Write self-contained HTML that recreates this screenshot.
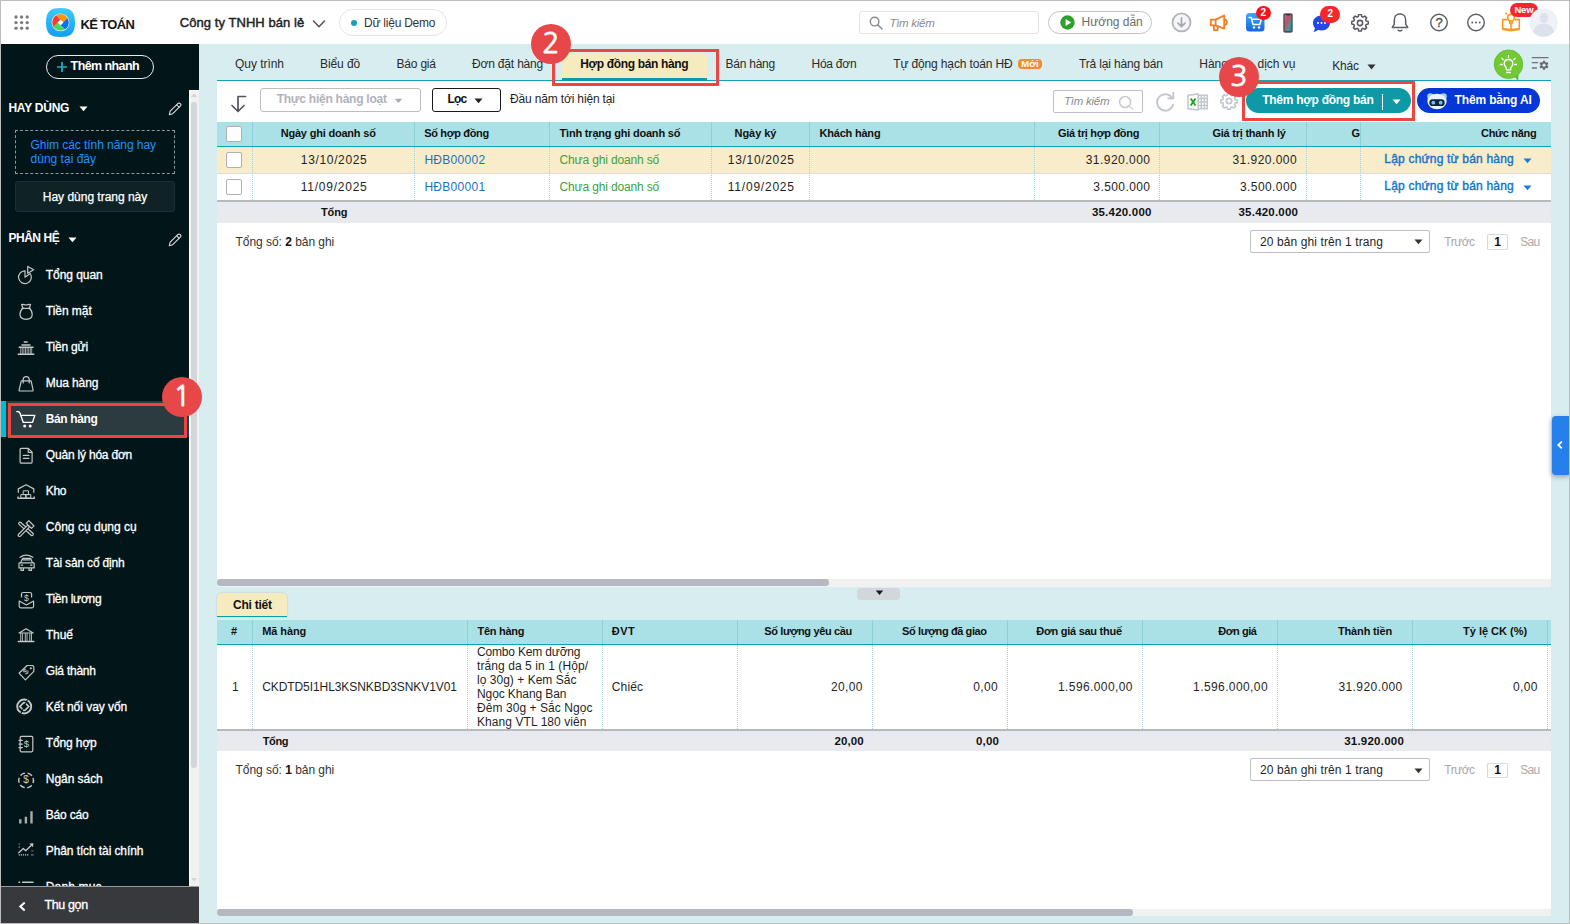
<!DOCTYPE html>
<html lang="vi">
<head>
<meta charset="utf-8">
<title>Kế toán - Hợp đồng bán hàng</title>
<style>
*{box-sizing:border-box;margin:0;padding:0}
html,body{width:1570px;height:924px;overflow:hidden;background:#fff}
body{font-family:"Liberation Sans",sans-serif;font-size:12px;color:#1f1f1f;position:relative}
.abs{position:absolute}
.t{position:absolute;white-space:nowrap}
#frame{position:absolute;left:0;top:0;width:1570px;height:924px;border:1px solid #bdbdbd;z-index:50;pointer-events:none}
#hdr{position:absolute;left:0;top:0;width:1570px;height:44px;background:#fff}
#sb{position:absolute;left:0;top:0;width:0;height:0}
#main{position:absolute;left:0;top:0;width:0;height:0}
#top{position:absolute;left:0;top:0;width:0;height:0;z-index:20}
.ic{fill:none;stroke:#c4c7c7;stroke-width:1.2;stroke-linecap:round;stroke-linejoin:round}
.vl{position:absolute;width:0;border-left:1px dotted #9dd3d9}
.vh{position:absolute;width:1px;background:#8fd0d6}
.cb{position:absolute;width:15.5px;height:15.5px;border:1px solid #b0b0b0;border-radius:2px;background:#fff}
.red{position:absolute;border:3px solid #ee4540}
.num{position:absolute;width:40px;height:40px;border-radius:50%;background:#e8474a;color:#fff;text-align:center;font-family:"NanumGothic","Liberation Sans",sans-serif;-webkit-text-stroke:.8px #fff;font-size:28.5px;line-height:39px}

</style>
</head>
<body>
<div id="hdr">
<svg class="abs" style="left:14.2px;top:15.3px;" width="16" height="16" viewBox="0 0 16 16"><circle cx="2.0" cy="2.0" r="1.65" fill="#7b7b7b"/><circle cx="2.0" cy="7.6" r="1.65" fill="#7b7b7b"/><circle cx="2.0" cy="13.2" r="1.65" fill="#7b7b7b"/><circle cx="7.6" cy="2.0" r="1.65" fill="#7b7b7b"/><circle cx="7.6" cy="7.6" r="1.65" fill="#7b7b7b"/><circle cx="7.6" cy="13.2" r="1.65" fill="#7b7b7b"/><circle cx="13.2" cy="2.0" r="1.65" fill="#7b7b7b"/><circle cx="13.2" cy="7.6" r="1.65" fill="#7b7b7b"/><circle cx="13.2" cy="13.2" r="1.65" fill="#7b7b7b"/></svg>
<svg class="abs" style="left:46px;top:8px;" width="29" height="29" viewBox="0 0 29 29"><defs><linearGradient id="lg" x1="0" y1="0" x2="0" y2="1"><stop offset="0" stop-color="#3ecbfb"/><stop offset="1" stop-color="#119ef0"/></linearGradient>
<clipPath id="lc"><circle cx="14.500" cy="14.400" r="8.300"/></clipPath></defs>
<path d="M14.500 0C24 0 29 2.500 29 14.500S24 29 14.500 29 0 26.500 0 14.500 5 0 14.500 0Z" fill="url(#lg)"/>
<circle cx="14.500" cy="14.400" r="8.900" fill="#e9f6fe"/>
<g clip-path="url(#lc)">
<path d="M14.500 11.800L-0.500 -3.200L32.200 -0.600L17.100 14.400Z" fill="#ff9705"/>
<path d="M17.100 14.400L32.200 -0.600L29.500 32L14.500 17Z" fill="#0b6dff"/>
<path d="M14.500 17L29.500 32L-3.100 29.400L11.900 14.400Z" fill="#4bd763"/>
<path d="M11.900 14.400L-3.100 29.400L-0.500 -3.200L14.500 11.800Z" fill="#ff3b30"/>
</g>
<path d="M14.500 11.600L17.300 14.400 14.500 17.200 11.700 14.400Z" fill="#fff"/></svg>
<svg class="abs" style="left:312px;top:19px;" width="14" height="10" viewBox="0 0 14 10"><path d="M1.5 2L7 7.8 12.5 2" fill="none" stroke="#555" stroke-width="1.5" stroke-linecap="round" stroke-linejoin="round"/></svg>
<div class="abs" style="left:339px;top:9px;width:108px;height:27px;border:1px solid #e1e4e8;border-radius:14px;background:#fff"></div>
<div class="abs" style="left:351px;top:20px;width:6px;height:6px;border-radius:50%;background:#18a0b0"></div>
<div class="abs" style="left:859px;top:11px;width:180px;height:23px;border:1px solid #e3e3e3;border-radius:3px;background:#fff"></div>
<svg class="abs" style="left:869px;top:16px;" width="14" height="14" viewBox="0 0 14 14"><circle cx="5.6" cy="5.6" r="4.3" fill="none" stroke="#8a8a8a" stroke-width="1.4"/><path d="M8.8 8.8L12.8 12.8" stroke="#8a8a8a" stroke-width="1.6" stroke-linecap="round"/></svg>
<div class="abs" style="left:1048px;top:11px;width:104px;height:23px;border:1px solid #c2c2c2;border-radius:12px;background:#fff"></div>
<svg class="abs" style="left:1060px;top:15px;" width="15" height="15" viewBox="0 0 15 15"><circle cx="7.5" cy="7.5" r="7.2" fill="#2ea12b"/><path d="M5.6 4.1V10.9L11.2 7.5Z" fill="#fff"/></svg>
<svg class="abs" style="left:1170.5px;top:11.5px;" width="21" height="21" viewBox="0 0 21 21"><circle cx="10.5" cy="10.4" r="9" fill="#f5f6f9" stroke="#b2b3b6" stroke-width="1.800"/><path d="M10.5 5.800V14.300M7 11.200L10.500 14.700 14 11.200" fill="none" stroke="#a9aaae" stroke-width="1.800" stroke-linecap="round" stroke-linejoin="round"/></svg>
<svg class="abs" style="left:1208px;top:14px;" width="22" height="18" viewBox="0 0 22 18"><g fill="none" stroke="#f67d20" stroke-width="1.800" stroke-linejoin="round" stroke-linecap="round"><path d="M2.800 5.600H7.600L16.200 1.500V14.600L7.600 11.300H2.800Z"/><path d="M7.600 5.600V11.300"/><path d="M5.900 11.600V16.100H9.700V12.300"/><path d="M16.600 5.500C19.600 5.900 19.600 10.400 16.600 10.800"/></g></svg>
<svg class="abs" style="left:1246px;top:13px;" width="19" height="19" viewBox="0 0 19 19"><defs><linearGradient id="cg" x1="0" y1="0" x2="0" y2="1"><stop offset="0" stop-color="#45a4f7"/><stop offset="1" stop-color="#1666e0"/></linearGradient></defs><rect x="0" y="0" width="18.5" height="18.5" rx="3.5" fill="url(#cg)"/><path d="M3 4.5H5.2L7 11.5H13.8L15.3 6.3H6" fill="none" stroke="#fff" stroke-width="1.5" stroke-linejoin="round" stroke-linecap="round"/><circle cx="8" cy="14.5" r="1.2" fill="#fff"/><circle cx="13" cy="14.5" r="1.2" fill="#fff"/></svg>
<div class="abs" style="left:1256px;top:5.8px;width:15px;height:14.3px;border-radius:50%;background:#f4141c"></div>
<svg class="abs" style="left:1283px;top:12.5px;" width="10" height="20" viewBox="0 0 10 20"><defs><linearGradient id="pg" x1="0" y1="0" x2="1" y2="1"><stop offset="0" stop-color="#7a86c8"/><stop offset=".35" stop-color="#d8455f"/><stop offset=".7" stop-color="#3d9e8e"/><stop offset="1" stop-color="#3a6fd0"/></linearGradient></defs><rect x="0.500" y="0.500" width="9" height="19" rx="1.800" fill="#3a3d42" stroke="#7c7f85" stroke-width="0.900"/><rect x="1.500" y="1.700" width="7" height="16.600" rx="0.800" fill="url(#pg)"/><rect x="3.300" y="1.300" width="3.400" height="1.100" rx=".5" fill="#2a2d33"/></svg>
<svg class="abs" style="left:1311.5px;top:14.5px;" width="19" height="18" viewBox="0 0 19 18"><path d="M9.5 0.5C14.5 0.5 18 3.8 18 8S14.5 15.5 9.5 15.5C8.3 15.5 7.2 15.3 6.2 15L1.5 17.2 3 13.2C1.7 11.9 1 10 1 8 1 3.8 4.5 0.5 9.500 0.5Z" fill="#2447e8"/><circle cx="6" cy="8" r="1" fill="#fff"/><circle cx="9.5" cy="8" r="1" fill="#fff"/><circle cx="13" cy="8" r="1" fill="#fff"/></svg>
<div class="abs" style="left:1320px;top:6px;width:20.3px;height:16.5px;border-radius:8.250px;background:#f6262b"></div>
<svg class="abs" style="left:1351.2px;top:13.5px;" width="18" height="18" viewBox="0 0 20 20"><g fill="none" stroke="#5a5d63" stroke-width="1.750" stroke-linejoin="round"><path d="M8.6 1.2h2.8l.5 2.3 1.5.7 2-1.2 2 2-1.2 2 .7 1.500 2.300.5v2.800l-2.300.5-.7 1.500 1.200 2-2 2-2-1.200-1.500.700-.5 2.300h-2.800l-.5-2.300-1.500-.700-2 1.200-2-2 1.200-2-.700-1.500-2.300-.5v-2.800l2.300-.5.700-1.500-1.200-2 2-2 2 1.200 1.500-.700Z" transform="translate(0 -.7)"/><circle cx="10" cy="10" r="2.900"/></g></svg>
<svg class="abs" style="left:1390px;top:12px;" width="20" height="22" viewBox="0 0 20 22"><g fill="none" stroke="#5a5d63" stroke-width="1.5" stroke-linejoin="round" stroke-linecap="round"><path d="M10 2C6.300 2 4.300 4.800 4.300 8.200V12.200L2.300 15.400H17.700L15.700 12.200V8.200C15.700 4.800 13.700 2 10 2Z"/><path d="M8 18.200C8.600 19.200 11.400 19.200 12 18.200"/></g></svg>
<svg class="abs" style="left:1429px;top:13px;" width="20" height="20" viewBox="0 0 20 20"><circle cx="10" cy="9.500" r="8.300" fill="none" stroke="#5a5d63" stroke-width="1.400"/></svg>
<svg class="abs" style="left:1466px;top:13px;" width="20" height="20" viewBox="0 0 20 20"><circle cx="10" cy="9.500" r="8.300" fill="none" stroke="#5a5d63" stroke-width="1.400"/><circle cx="6.300" cy="9.500" r="1" fill="#5a5d63"/><circle cx="10" cy="9.500" r="1" fill="#5a5d63"/><circle cx="13.700" cy="9.500" r="1" fill="#5a5d63"/></svg>
<svg class="abs" style="left:1501px;top:12px;" width="20" height="20" viewBox="0 0 20 20"><g fill="none" stroke="#f89a1c" stroke-width="1.600" stroke-linejoin="round" stroke-linecap="round"><path d="M5.800 7.600H1.700V16.600L10 17.900 18.300 16.600V7.600H14.200"/><path d="M1.700 17.600L10 18.800 18.300 17.600" stroke-width="1.200"/><circle cx="10" cy="5.700" r="3.300"/><path d="M8.700 9V11.300H11.300V9M10 11.500V17.500"/><path d="M4.800 1.300L5.300 1.800"/></g></svg>
<div class="abs" style="left:1510px;top:3.2px;width:28.2px;height:13.4px;border-radius:7px;background:#f5272d"></div>
<svg class="abs" style="left:1528.8px;top:8px;" width="29" height="29" viewBox="0 0 29 29"><defs><clipPath id="av"><circle cx="14.500" cy="14.500" r="14.300"/></clipPath></defs><circle cx="14.500" cy="14.500" r="14.300" fill="#eef1f6"/><g clip-path="url(#av)" fill="#dce2ec"><ellipse cx="14.800" cy="10" rx="4" ry="5.200"/><path d="M3.500 29C3.500 20 8 17 11.500 16H18C21.500 17 26 20 26 29Z"/></g></svg>
<div class="t" style="font-size:13px;color:#161616;line-height:16px;top:17.30px;font-weight:bold;letter-spacing:-0.628px;left:80.50px;">KẾ TOÁN</div>
<div class="t" style="font-size:13px;color:#222;line-height:16px;top:14.60px;-webkit-text-stroke:0.45px #222;letter-spacing:0.071px;left:179.70px;">Công ty TNHH bán lẻ</div>
<div class="t" style="font-size:12px;color:#333;line-height:16px;top:14.80px;letter-spacing:-0.233px;left:364.00px;">Dữ liệu Demo</div>
<div class="t" style="font-size:11.5px;color:#8c8c8c;line-height:16px;top:15.00px;font-style:italic;letter-spacing:-0.269px;left:889.40px;">Tìm kiếm</div>
<div class="t" style="font-size:12px;color:#6b6b6b;line-height:16px;top:14.30px;letter-spacing:-0.010px;left:1081.60px;">Hướng dẫn</div>
<div class="t" style="font-size:10px;color:#fff;line-height:16px;top:4.90px;font-weight:bold;left:1260.60px;">2</div>
<div class="t" style="font-size:10px;color:#fff;line-height:16px;top:6.30px;font-weight:bold;left:1327.40px;">2</div>
<div class="t" style="font-size:13px;color:#4a4d53;line-height:16px;top:14.70px;-webkit-text-stroke:0.3px #4a4d53;left:1435.60px;">?</div>
<div class="t" style="font-size:9.5px;color:#fff;line-height:16px;top:1.90px;font-weight:bold;letter-spacing:-0.173px;left:1514.40px;">New</div>
</div>
<div id="sb">
<div class="abs" style="left:0px;top:44px;width:199px;height:880px;background:#02161a"></div>
<div class="abs" style="left:189px;top:90px;width:10px;height:796px;background:#f1f1f1;border-left:1px solid #fff;border-top:1px solid #fff"></div>
<div class="abs" style="left:191px;top:102px;width:6px;height:666px;background:#d3d6db;border-radius:3px"></div>
<svg class="abs" style="left:190px;top:92px;" width="8" height="6" viewBox="0 0 8 6"><path d="M1 5L4 1.500 7 5Z" fill="#d4d4d4"/></svg>
<svg class="abs" style="left:190px;top:877px;" width="8" height="6" viewBox="0 0 8 6"><path d="M1 1L4 4.500 7 1Z" fill="#d4d4d4"/></svg>
<div class="abs" style="left:46px;top:55px;width:108px;height:24px;border:1.3px solid #e9eded;border-radius:12px;background:#02161a"></div>
<svg class="abs" style="left:56px;top:60.5px;" width="12" height="12" viewBox="0 0 12 12"><path d="M6 1V11M1 6H11" stroke="#19b3c4" stroke-width="1.700" fill="none"/></svg>
<svg class="abs" style="left:78.5px;top:105.5px;" width="9" height="6" viewBox="0 0 9 6"><path d="M0.500 0.500H8.500L4.500 5.200Z" fill="#fff"/></svg>
<svg class="abs" style="left:167.5px;top:101.5px;" width="14" height="14" viewBox="0 0 14 14"><g fill="none" stroke="#d6d8d8" stroke-width="1.150" stroke-linejoin="round" stroke-linecap="round"><path d="M1.300 12.700L2.200 9.200 9.800 1.600C10.500 0.900 11.600 0.900 12.300 1.600 13 2.300 13 3.400 12.300 4.100L4.700 11.700Z"/><path d="M8.700 2.800L11.100 5.200"/></g></svg>
<div class="abs" style="left:15px;top:130px;width:160px;height:44px;border:1px dashed #8b9799"></div>
<div class="abs" style="left:15px;top:181px;width:160px;height:31px;background:#0f2327;border:1px solid #1d3035;border-radius:3px"></div>
<svg class="abs" style="left:68.2px;top:236.5px;" width="9" height="6" viewBox="0 0 9 6"><path d="M0.500 0.500H8.500L4.500 5.200Z" fill="#fff"/></svg>
<svg class="abs" style="left:167.5px;top:232.5px;" width="14" height="14" viewBox="0 0 14 14"><g fill="none" stroke="#d6d8d8" stroke-width="1.150" stroke-linejoin="round" stroke-linecap="round"><path d="M1.300 12.700L2.200 9.200 9.800 1.600C10.500 0.900 11.600 0.900 12.300 1.600 13 2.300 13 3.400 12.300 4.100L4.700 11.700Z"/><path d="M8.700 2.800L11.100 5.200"/></g></svg>
<div class="abs" style="left:1px;top:401px;width:5px;height:36px;background:#00bcd4"></div>
<div class="abs" style="left:6px;top:401px;width:183px;height:36px;background:#2c3b3f"></div>
<svg class="abs ic" style="left:16px;top:264.7px;" width="20" height="20" viewBox="0 0 20 20"><path d="M9 12.200V5.800A6.400 6.400 0 1 0 14.200 8.500Z"/><path d="M11.700 1.400V8.300L17.700 4.800Z"/></svg>
<svg class="abs ic" style="left:16px;top:300.7px;" width="20" height="20" viewBox="0 0 20 20"><path d="M7 7.300C4.600 9 4 11.500 4 13.600 4 16.800 6.500 18.300 10.100 18.300S16.200 16.800 16.200 13.600C16.200 11.500 15.600 9 13.200 7.300"/><path d="M6 7.300H14.200M7 7.300L5.600 3.500C7 2.900 8.500 4 10.100 4S13.200 2.900 14.600 3.500L13.200 7.300"/></svg>
<svg class="abs ic" style="left:16px;top:336.7px;" width="20" height="20" viewBox="0 0 20 20"><path d="M8.300 5.100H11.100M6 8H14M3.200 10.200H17M2.200 17.200H17.800" stroke-width="1.500"/><path d="M4.700 10.500V16.500M6.300 10.500V16.500M7.900 10.500V16.500M9.500 10.500V16.500M11.100 10.500V16.500M12.700 10.500V16.500M14.300 10.500V16.500M15.700 10.500V16.500" stroke-width=".8"/></svg>
<svg class="abs ic" style="left:16px;top:372.7px;" width="20" height="20" viewBox="0 0 20 20"><path d="M5.300 7.900H15.100L17.100 17.200C17.200 17.700 16.900 18 16.400 18H3.800C3.300 18 3 17.700 3.100 17.200Z"/><path d="M7.200 10V6.600C7.200 4.800 8.500 3.700 10.200 3.700S13.200 4.800 13.200 6.600V10"/></svg>
<svg class="abs ic" style="left:16px;top:408.7px;" width="20" height="20" viewBox="0 0 20 20"><path d="M0.900 2.600C2.500 2.400 3.500 2.900 4 4.300L7.300 13.400H16.500L18.800 6.400H5" stroke="#fff" stroke-width="1.400"/><circle cx="8.700" cy="17" r="1.500" fill="#fff" stroke="none"/><circle cx="14.200" cy="17" r="1.500" fill="#fff" stroke="none"/></svg>
<svg class="abs ic" style="left:16px;top:444.7px;" width="20" height="20" viewBox="0 0 20 20"><path d="M4.100 4.700C4.100 4 4.700 3.400 5.400 3.400H12.300L16.100 7.200V16.900C16.100 17.600 15.500 18.200 14.800 18.200H5.400C4.700 18.200 4.100 17.600 4.100 16.900Z"/><path d="M12.200 3.600V7.300H15.900M7.300 10.400H12.900M7.300 13.300H12.900"/></svg>
<svg class="abs ic" style="left:16px;top:480.7px;" width="20" height="20" viewBox="0 0 20 20"><path d="M2.300 11.300V7.900L10.100 3.700 17.800 7.900V11.300"/><path d="M2 16V17.400H18.200V16" stroke-width="1.400"/><path d="M7.600 9.800H12.500V13.600H7.600ZM5.200 13.600H10.100V17H5.200ZM10.100 13.600H14.800V17H10.100Z" stroke-width="1"/></svg>
<svg class="abs ic" style="left:16px;top:516.7px;" width="20" height="20" viewBox="0 0 20 20"><g transform="translate(9.900 11.800)"><rect x="-9.300" y="-1.300" width="18.800" height="2.600" rx="1.300" transform="rotate(42)"/><g transform="rotate(-45)"><rect x="-10.300" y="-1.300" width="14.500" height="2.600" rx="1.300" fill="#02161a"/><rect x="4.200" y="-3.700" width="3.600" height="7.400" fill="#02161a"/></g></g></svg>
<svg class="abs ic" style="left:16px;top:552.7px;" width="20" height="20" viewBox="0 0 20 20"><path d="M4.100 4.300C7.600 1.700 12.600 1.700 16.800 4.300"/><path d="M4.500 10L6.600 5.400H14.700L16.500 10M3 10.600C3 10.200 3.300 9.900 3.800 9.900H17.400C17.900 9.900 18.200 10.200 18.200 10.600V14.900H3ZM5 15V17.400H7.500V15M13 15V17.400H15.500V15M7.200 6.800H14M5.300 12.200H6.600M14.600 12.200H15.900"/></svg>
<svg class="abs ic" style="left:16px;top:588.7px;" width="20" height="20" viewBox="0 0 20 20"><path d="M5.500 8V5C5.500 4.100 6.200 3.500 7 3.500H14C14.800 3.500 15.600 4.100 15.600 5V8"/><path d="M3.200 12V17.300C3.200 18.200 3.900 18.800 4.700 18.800H16.100C16.900 18.800 17.600 18.200 17.600 17.300V12L10.400 16Z"/></svg>
<svg class="abs ic" style="left:16px;top:624.7px;" width="20" height="20" viewBox="0 0 20 20"><path d="M3 8L10.100 3.700 17.200 8Z"/><path d="M2.300 16.400H17.800" stroke-width="1.500"/><path d="M4.700 8.600V15.600M6.400 8.600V15.600M9.300 8.600V15.600M11 8.600V15.600M13.800 8.600V15.600M15.500 8.600V15.600" stroke-width=".9"/></svg>
<svg class="abs ic" style="left:16px;top:660.7px;" width="20" height="20" viewBox="0 0 20 20"><path d="M3 12.200L11.100 4.500H16.600L17.800 5.700V10.400L9.400 18.900Z"/><circle cx="14.800" cy="7.300" r="0.500"/></svg>
<svg class="abs ic" style="left:16px;top:696.7px;" width="20" height="20" viewBox="0 0 20 20"><circle cx="8.200" cy="9.500" r="7" stroke-width="1.900"/><path d="M7.700 5.600L3.900 9.500 7.700 13.400M8.900 5.600L12.700 9.500 8.900 13.400" stroke-width="1.700" stroke-linejoin="miter"/><path d="M5 16.300L11.400 2.700" stroke="#02161a" stroke-width="1.100"/></svg>
<svg class="abs ic" style="left:16px;top:732.7px;" width="20" height="20" viewBox="0 0 20 20"><rect x="4.200" y="3.400" width="12.600" height="15.400" rx="1.200"/><path d="M3 7.300H6.400M3 11.100H6.400M3 14.700H6.400"/></svg>
<svg class="abs ic" style="left:16px;top:768.7px;" width="20" height="20" viewBox="0 0 20 20"><circle cx="10.100" cy="11.400" r="7.400" stroke-dasharray="5.200 2.550" stroke-width="1.400" stroke-linecap="butt" transform="rotate(-20 10.100 11.400)"/></svg>
<svg class="abs ic" style="left:16px;top:804.7px;" width="20" height="20" viewBox="0 0 20 20"><path d="M4.300 18.500V14.300M9.900 18.500V11.800M15.500 18.500V6.200" stroke-width="2.400" stroke-linecap="butt" stroke="#a9acac"/></svg>
<svg class="abs ic" style="left:16px;top:840.7px;" width="20" height="20" viewBox="0 0 20 20"><path d="M2.700 11.800L7.300 7.500 9.700 9.700 15.600 4"/><path d="M13.400 2.600L17.400 2.200 17 6.200Z" fill="#c4c7c7" stroke="none"/><path d="M2.700 13.900H13M15.400 13.900H17.800" stroke-dasharray="1.200 .9" stroke-linecap="butt"/><path d="M2.700 3H4.300M2.700 6.100H4.300M15.600 10H17.400" stroke-dasharray="1 .6" stroke-linecap="butt"/></svg>
<div class="abs" style="left:0;top:870px;width:189px;height:16px;overflow:hidden"><svg class="abs ic" style="left:16px;top:6.7px" width="20" height="20" viewBox="0 0 20 20"><path d="M6.600 5.300H17M6.600 10H17M6.600 14.600H17" stroke-width="1.500"/><path d="M3 5.300H3.600M3 10H3.600M3 14.600H3.600" stroke-width="1.500"/></svg><div class="t" style="left:45.8px;top:8.7px;line-height:16px;color:#fff;font-size:12px;-webkit-text-stroke:.3px #fff;letter-spacing:.15px">Danh mục</div></div>
<div class="abs" style="left:0px;top:886px;width:199px;height:38px;background:#38393d;border-top:1px solid #9a9c9f"></div>
<svg class="abs" style="left:18px;top:900.5px;" width="9" height="11" viewBox="0 0 9 11"><path d="M6.700 1.500L2.300 5.500 6.700 9.500" fill="none" stroke="#fff" stroke-width="2" /></svg>
<div class="t" style="font-size:12.5px;color:#fff;line-height:16px;top:58.00px;font-weight:bold;letter-spacing:-0.590px;left:70.60px;">Thêm nhanh</div>
<div class="t" style="font-size:12px;color:#fff;line-height:16px;top:99.60px;font-weight:bold;letter-spacing:-0.241px;left:8.40px;">HAY DÙNG</div>
<div class="t" style="font-size:12px;color:#1f93ff;line-height:16px;top:137.20px;letter-spacing:-0.064px;left:30.60px;">Ghim các tính năng hay</div>
<div class="t" style="font-size:12px;color:#1f93ff;line-height:16px;top:151.20px;left:30.60px;">dùng tại đây</div>
<div class="t" style="font-size:12px;color:#fff;line-height:16px;top:189.00px;-webkit-text-stroke:0.25px #fff;letter-spacing:-0.015px;left:42.80px;">Hay dùng trang này</div>
<div class="t" style="font-size:12px;color:#fff;line-height:16px;top:230.40px;font-weight:bold;letter-spacing:-0.453px;left:8.40px;">PHÂN HỆ</div>
<div class="t" style="font-size:12px;color:#fff;line-height:16px;top:266.70px;-webkit-text-stroke:0.3px #fff;letter-spacing:-0.049px;left:45.80px;">Tổng quan</div>
<div class="t" style="font-size:12px;color:#fff;line-height:16px;top:302.70px;-webkit-text-stroke:0.3px #fff;letter-spacing:-0.036px;left:45.80px;">Tiền mặt</div>
<div class="t" style="font-size:12px;color:#fff;line-height:16px;top:338.70px;-webkit-text-stroke:0.3px #fff;letter-spacing:-0.187px;left:45.80px;">Tiền gửi</div>
<div class="t" style="font-size:12px;color:#fff;line-height:16px;top:374.70px;-webkit-text-stroke:0.3px #fff;letter-spacing:-0.111px;left:45.80px;">Mua hàng</div>
<div class="t" style="font-size:12px;color:#fff;line-height:16px;top:410.70px;font-weight:bold;letter-spacing:-0.382px;left:45.80px;">Bán hàng</div>
<div class="t" style="font-size:12px;color:#fff;line-height:16px;top:446.70px;-webkit-text-stroke:0.3px #fff;letter-spacing:-0.198px;left:45.80px;">Quản lý hóa đơn</div>
<div class="t" style="font-size:12px;color:#fff;line-height:16px;top:482.70px;-webkit-text-stroke:0.3px #fff;letter-spacing:-0.380px;left:45.80px;">Kho</div>
<div class="t" style="font-size:12px;color:#fff;line-height:16px;top:518.70px;-webkit-text-stroke:0.3px #fff;letter-spacing:0.019px;left:45.80px;">Công cụ dụng cụ</div>
<div class="t" style="font-size:12px;color:#fff;line-height:16px;top:554.70px;-webkit-text-stroke:0.3px #fff;letter-spacing:-0.171px;left:45.80px;">Tài sản cố định</div>
<div class="t" style="font-size:8.5px;color:#c9cccc;line-height:16px;top:589.70px;left:24.04px;">$</div>
<div class="t" style="font-size:12px;color:#fff;line-height:16px;top:590.70px;-webkit-text-stroke:0.3px #fff;letter-spacing:-0.262px;left:45.80px;">Tiền lương</div>
<div class="t" style="font-size:12px;color:#fff;line-height:16px;top:626.70px;-webkit-text-stroke:0.3px #fff;letter-spacing:-0.053px;left:45.80px;">Thuế</div>
<div class="t" style="font-size:8px;color:#c9cccc;line-height:16px;top:664.20px;left:24.20px;transform:rotate(-45deg);">$</div>
<div class="t" style="font-size:12px;color:#fff;line-height:16px;top:662.70px;-webkit-text-stroke:0.3px #fff;letter-spacing:-0.231px;left:45.80px;">Giá thành</div>
<div class="t" style="font-size:12px;color:#fff;line-height:16px;top:698.70px;-webkit-text-stroke:0.3px #fff;letter-spacing:-0.040px;left:45.80px;">Kết nối vay vốn</div>
<div class="t" style="font-size:9.5px;color:#c9cccc;line-height:16px;top:735.80px;left:23.86px;">$</div>
<div class="t" style="font-size:12px;color:#fff;line-height:16px;top:734.70px;-webkit-text-stroke:0.3px #fff;letter-spacing:-0.129px;left:45.80px;">Tổng hợp</div>
<div class="t" style="font-size:10px;color:#c9cccc;line-height:16px;top:772.20px;left:23.32px;">$</div>
<div class="t" style="font-size:12px;color:#fff;line-height:16px;top:770.70px;-webkit-text-stroke:0.3px #fff;letter-spacing:-0.047px;left:45.80px;">Ngân sách</div>
<div class="t" style="font-size:12px;color:#fff;line-height:16px;top:806.70px;-webkit-text-stroke:0.3px #fff;letter-spacing:-0.208px;left:45.80px;">Báo cáo</div>
<div class="t" style="font-size:12px;color:#fff;line-height:16px;top:842.70px;-webkit-text-stroke:0.3px #fff;letter-spacing:-0.100px;left:45.80px;">Phân tích tài chính</div>
<div class="t" style="font-size:12.5px;color:#fff;line-height:16px;top:896.60px;-webkit-text-stroke:0.3px #fff;letter-spacing:-0.362px;left:44.40px;">Thu gọn</div>
</div>
<div id="main">
<div class="abs" style="left:199px;top:44px;width:1371px;height:880px;background:#d8edf0"></div>
<div class="abs" style="left:217px;top:80px;width:1334px;height:506.5px;background:#fff"></div>
<div class="abs" style="left:217px;top:79.7px;width:1334px;height:1.5px;background:#14a3b2"></div>
<div class="abs" style="left:562px;top:53.4px;width:145px;height:27.5px;background:#f5ebbf;border-radius:5px 5px 0 0;border-bottom:3px solid #0f9aa8"></div>
<div class="abs" style="left:1017.8px;top:59.3px;width:24.4px;height:9.6px;background:#f68b2c;border-radius:4px"></div>
<svg class="abs" style="left:1366.5px;top:63.5px;" width="9" height="6" viewBox="0 0 9 6"><path d="M0.500 0.500H8.500L4.500 5.500Z" fill="#333"/></svg>
<svg class="abs" style="left:1493px;top:49px;" width="32" height="34" viewBox="0 0 32 34"><path d="M21 26.500L25.200 32.600 25.600 21Z" fill="#5fbd2e"/><circle cx="15.500" cy="15.200" r="14.300" fill="#72c931" stroke="#5dbb2d" stroke-width="0.800"/><g transform="translate(0 1.500)" fill="none" stroke="#fff" stroke-width="1.300" stroke-linecap="round" stroke-linejoin="round"><path d="M15.500 9C12.900 9 11.200 10.900 11.200 13.200 11.200 15.200 12.600 16.200 13.300 17.500V19.300H17.700V17.500C18.400 16.200 19.800 15.200 19.800 13.200 19.800 10.900 18.100 9 15.500 9Z"/><path d="M13.800 22H17.200" stroke-width="1.600"/><path d="M15.500 5V6.800M9 7.800L10.100 9.200M22 7.800L20.900 9.200M7.500 14H9.300M21.700 14H23.500"/></g></svg>
<svg class="abs" style="left:1531px;top:55px;" width="19" height="16" viewBox="0 0 19 16"><g fill="none" stroke="#707276" stroke-width="1.300" stroke-linecap="round"><path d="M1.300 2.600H17M1.300 7.700H6.600M1.300 13H5.500"/></g><g stroke="#66686c" stroke-width="2.200"><path d="M13 5.700V14.700M9.100 7.950L16.900 12.450M16.900 7.950L9.100 12.450"/></g><circle cx="13" cy="10.200" r="3.300" fill="#66686c"/><circle cx="13" cy="10.200" r="1.600" fill="#d8edf0"/></svg>
<svg class="abs" style="left:230px;top:93.5px;" width="17" height="19" viewBox="0 0 17 19"><g fill="none" stroke="#53565c" stroke-width="1.700" stroke-linecap="round" stroke-linejoin="round"><path d="M8 3V17M2 11.500L8 17.500 14 11.500M8 2.500H15.500"/></g></svg>
<div class="abs" style="left:260px;top:88.3px;width:161px;height:23.5px;border:1px solid #bdbdbd;border-radius:3px;background:#fff"></div>
<svg class="abs" style="left:393.5px;top:97.5px;" width="9" height="6" viewBox="0 0 9 6"><path d="M0.800 0.800H8.200L4.500 5Z" fill="#a9acb1"/></svg>
<div class="abs" style="left:432px;top:88.3px;width:69px;height:23.5px;border:1px solid #1a1a1a;border-radius:3px;background:#fff"></div>
<svg class="abs" style="left:473.5px;top:97.5px;" width="9" height="6" viewBox="0 0 9 6"><path d="M0.500 0.500H8.500L4.500 5.300Z" fill="#222"/></svg>
<div class="abs" style="left:1053px;top:90px;width:90px;height:23px;border:1.300px solid #b9bec8;border-radius:2px;background:#fff"></div>
<svg class="abs" style="left:1117.5px;top:95px;" width="16" height="16" viewBox="0 0 16 16"><circle cx="7.100" cy="7" r="5.500" fill="none" stroke="#c9caca" stroke-width="1.600"/><path d="M11.300 11.200L15 14.300" stroke="#cfd0d0" stroke-width="1.300" stroke-linecap="round"/></svg>
<svg class="abs" style="left:1155px;top:90px;" width="21" height="22" viewBox="0 0 21 22"><g fill="none" stroke="#c3c7ce" stroke-width="1.900" stroke-linecap="round" stroke-linejoin="round"><path d="M17.600 8.700A8.200 8.200 0 1 0 18.200 14.600"/><path d="M13.300 8.300H18.300V2.600"/></g></svg>
<svg class="abs" style="left:1187px;top:92.5px;" width="22" height="18" viewBox="0 0 22 18"><path d="M11 2.300H20.300V15.700H11M11 5.600H20.300M11 9H20.300M11 12.400H20.300M14.300 2.300V15.700M17.400 2.300V15.700" stroke="#c3c6cd" stroke-width="1.500" fill="none"/><path d="M1 2.200L11.200 0.900V17.100L1 15.800Z" fill="#fff" stroke="#c0c3ca" stroke-width="1.500" stroke-linejoin="round"/><path d="M3.700 5.500L8.500 12.500M8.500 5.500L3.700 12.500" stroke="#22a022" stroke-width="1.900" fill="none"/></svg>
<svg class="abs" style="left:1220px;top:92px;" width="18" height="18" viewBox="0 0 18 18"><g fill="none" stroke="#c3c7ce" stroke-width="1.900" stroke-linejoin="round"><path d="M8.600 1.200h2.800l.5 2.300 1.500.7 2-1.200 2 2-1.200 2 .7 1.500 2.300.5v2.800l-2.300.5-.7 1.500 1.200 2-2 2-2-1.200-1.500.7-.5 2.300h-2.800l-.5-2.300-1.500-.7-2 1.200-2-2 1.200-2-.7-1.500-2.300-.5v-2.800l2.300-.5.7-1.500-1.200-2 2-2 2 1.200 1.500-.7Z" transform="scale(.9)"/><circle cx="9" cy="9" r="2.600"/></g></svg>
<div class="abs" style="left:1246px;top:88.3px;width:165px;height:24.5px;background:#0f98a5;border-radius:12.5px"></div>
<div class="abs" style="left:1382px;top:93.7px;width:1px;height:16px;background:#fff"></div>
<svg class="abs" style="left:1392px;top:98.5px;" width="9" height="6" viewBox="0 0 9 6"><path d="M0.500 0.500H8.500L4.500 5.300Z" fill="#fff"/></svg>
<div class="abs" style="left:1417px;top:88.3px;width:123px;height:24.5px;background:#0537d6;border-radius:12.5px"></div>
<svg class="abs" style="left:1426px;top:91px;" width="22" height="20" viewBox="0 0 22 20"><circle cx="4.500" cy="5.500" r="3.300" fill="#9fd3ee"/><circle cx="17.500" cy="5.500" r="3.300" fill="#9fd3ee"/><ellipse cx="11" cy="10.500" rx="9.600" ry="7.800" fill="#eaf3fb"/><rect x="3.300" y="8.300" width="15.400" height="6.800" rx="3.400" fill="#14213a"/><circle cx="7.300" cy="11.700" r="1.900" fill="#59c8ff"/><circle cx="14.700" cy="11.700" r="1.900" fill="#59c8ff"/></svg>
<div class="abs" style="left:217px;top:122px;width:1334px;height:24px;background:#aae1e7"></div>
<div class="abs" style="left:217px;top:145.5px;width:1334px;height:1.5px;background:#14a3b2"></div>
<div class="abs" style="left:217px;top:147px;width:1334px;height:26px;background:#f9ecca"></div>
<div class="abs" style="left:217px;top:173px;width:1334px;height:1px;background:#dcdcdc"></div>
<div class="abs" style="left:217px;top:200px;width:1334px;height:1.5px;background:#b9b9b9"></div>
<div class="abs" style="left:217px;top:201.5px;width:1334px;height:21.3px;background:#e9eaef"></div>
<div class="vh" style="left:251.9px;top:122px;height:23.500px"></div>
<div class="vl" style="left:251.9px;top:147px;height:53px"></div>
<div class="vh" style="left:414.0px;top:122px;height:23.500px"></div>
<div class="vl" style="left:414.0px;top:147px;height:53px"></div>
<div class="vh" style="left:548.9px;top:122px;height:23.500px"></div>
<div class="vl" style="left:548.9px;top:147px;height:53px"></div>
<div class="vh" style="left:711.0px;top:122px;height:23.500px"></div>
<div class="vl" style="left:711.0px;top:147px;height:53px"></div>
<div class="vh" style="left:808.8px;top:122px;height:23.500px"></div>
<div class="vl" style="left:808.8px;top:147px;height:53px"></div>
<div class="vh" style="left:1034.0px;top:122px;height:23.500px"></div>
<div class="vl" style="left:1034.0px;top:147px;height:53px"></div>
<div class="vh" style="left:1159.3px;top:122px;height:23.500px"></div>
<div class="vl" style="left:1159.3px;top:147px;height:53px"></div>
<div class="vh" style="left:1306.3px;top:122px;height:23.500px"></div>
<div class="vl" style="left:1306.3px;top:147px;height:53px"></div>
<div class="vh" style="left:1360.1px;top:122px;height:23.500px"></div>
<div class="vl" style="left:1360.1px;top:147px;height:53px"></div>
<div class="cb" style="left:226px;top:126px"></div>
<div class="cb" style="left:226px;top:152px"></div>
<div class="cb" style="left:226px;top:179px"></div>
<svg class="abs" style="left:1522.5px;top:158.3px;" width="9" height="6" viewBox="0 0 9 6"><path d="M0.500 0.500H8.500L4.500 5.300Z" fill="#1a7bd0"/></svg>
<svg class="abs" style="left:1522.5px;top:185px;" width="9" height="6" viewBox="0 0 9 6"><path d="M0.500 0.500H8.500L4.500 5.300Z" fill="#1a7bd0"/></svg>
<div class="abs" style="left:1250px;top:230px;width:180px;height:23px;border:1px solid #bbbfc7;border-radius:2px;background:#fff"></div>
<svg class="abs" style="left:1413.5px;top:239.3px;" width="9" height="6" viewBox="0 0 9 6"><path d="M0.500 0.500H8.500L4.500 5.300Z" fill="#333"/></svg>
<div class="abs" style="left:1487px;top:234.4px;width:20.5px;height:15.2px;border:1px solid #d9d9d9;border-radius:1px;background:#fff"></div>
<div class="abs" style="left:217px;top:578.5px;width:1334px;height:8px;background:#f1f1f1"></div>
<div class="abs" style="left:217px;top:579.3px;width:612px;height:6.6px;background:#b5b8c1;border-radius:3.300px"></div>
<div class="abs" style="left:1552px;top:416px;width:18px;height:59px;background:#2680eb;border-radius:4px 0 0 4px;box-shadow:-1px 2px 5px rgba(0,0,0,.3)"></div>
<svg class="abs" style="left:1555.5px;top:439.6px;" width="8" height="10" viewBox="0 0 8 10"><path d="M5.800 1.600L2.300 5 5.800 8.400" fill="none" stroke="#fff" stroke-width="1.800"/></svg>
<div class="abs" style="left:857px;top:588px;width:43px;height:12px;background:#d3d6db;border-radius:4px"></div>
<svg class="abs" style="left:874.5px;top:590.3px;" width="9" height="6" viewBox="0 0 9 6"><path d="M0.800 0.500H8.200L4.500 5Z" fill="#1a1a1a"/></svg>
<div class="abs" style="left:217px;top:593px;width:70px;height:24.3px;background:#f5ebbf;border-radius:5px 5px 0 0;border-bottom:1.500px solid #0f9aa8;box-shadow:0 0 2px rgba(0,0,0,.18)"></div>
<div class="abs" style="left:217px;top:620px;width:1334px;height:296px;background:#fff"></div>
<div class="abs" style="left:217px;top:620px;width:1334px;height:24px;background:#aae1e7"></div>
<div class="abs" style="left:217px;top:643.5px;width:1334px;height:1.5px;background:#14a3b2"></div>
<div class="abs" style="left:217px;top:729.3px;width:1334px;height:1.5px;background:#b9b9b9"></div>
<div class="abs" style="left:217px;top:730.8px;width:1334px;height:20.2px;background:#e9eaef"></div>
<div class="vh" style="left:251.5px;top:620px;height:23.500px"></div>
<div class="vl" style="left:251.5px;top:645px;height:84px"></div>
<div class="vh" style="left:467.3px;top:620px;height:23.500px"></div>
<div class="vl" style="left:467.3px;top:645px;height:84px"></div>
<div class="vh" style="left:602.0px;top:620px;height:23.500px"></div>
<div class="vl" style="left:602.0px;top:645px;height:84px"></div>
<div class="vh" style="left:736.8px;top:620px;height:23.500px"></div>
<div class="vl" style="left:736.8px;top:645px;height:84px"></div>
<div class="vh" style="left:872.0px;top:620px;height:23.500px"></div>
<div class="vl" style="left:872.0px;top:645px;height:84px"></div>
<div class="vh" style="left:1006.8px;top:620px;height:23.500px"></div>
<div class="vl" style="left:1006.8px;top:645px;height:84px"></div>
<div class="vh" style="left:1141.8px;top:620px;height:23.500px"></div>
<div class="vl" style="left:1141.8px;top:645px;height:84px"></div>
<div class="vh" style="left:1276.9px;top:620px;height:23.500px"></div>
<div class="vl" style="left:1276.9px;top:645px;height:84px"></div>
<div class="vh" style="left:1412.0px;top:620px;height:23.500px"></div>
<div class="vl" style="left:1412.0px;top:645px;height:84px"></div>
<div class="vh" style="left:1547.1px;top:620px;height:23.500px"></div>
<div class="vl" style="left:1547.1px;top:645px;height:84px"></div>
<div class="abs" style="left:1250px;top:758px;width:180px;height:23px;border:1px solid #bbbfc7;border-radius:2px;background:#fff"></div>
<svg class="abs" style="left:1413.5px;top:767.5px;" width="9" height="6" viewBox="0 0 9 6"><path d="M0.500 0.500H8.500L4.500 5.300Z" fill="#333"/></svg>
<div class="abs" style="left:1487px;top:762.6px;width:20.5px;height:15.2px;border:1px solid #d9d9d9;border-radius:1px;background:#fff"></div>
<div class="abs" style="left:217px;top:908.5px;width:1334px;height:7.5px;background:#f1f1f1"></div>
<div class="abs" style="left:217px;top:909.2px;width:916px;height:6.4px;background:#b5b8c1;border-radius:3.200px"></div>
<div class="t" style="font-size:12px;color:#2a2a2a;line-height:16px;top:56.20px;letter-spacing:-0.045px;left:235.00px;">Quy trình</div>
<div class="t" style="font-size:12px;color:#2a2a2a;line-height:16px;top:56.20px;letter-spacing:-0.084px;left:320.00px;">Biểu đồ</div>
<div class="t" style="font-size:12px;color:#2a2a2a;line-height:16px;top:56.20px;letter-spacing:-0.201px;left:396.50px;">Báo giá</div>
<div class="t" style="font-size:12px;color:#2a2a2a;line-height:16px;top:56.20px;letter-spacing:-0.179px;left:472.00px;">Đơn đặt hàng</div>
<div class="t" style="font-size:12px;color:#111;line-height:16px;top:56.20px;font-weight:bold;letter-spacing:-0.341px;left:580.30px;">Hợp đồng bán hàng</div>
<div class="t" style="font-size:12px;color:#2a2a2a;line-height:16px;top:56.20px;letter-spacing:-0.256px;left:725.60px;">Bán hàng</div>
<div class="t" style="font-size:12px;color:#2a2a2a;line-height:16px;top:56.20px;letter-spacing:-0.246px;left:811.50px;">Hóa đơn</div>
<div class="t" style="font-size:12px;color:#2a2a2a;line-height:16px;top:56.20px;letter-spacing:-0.137px;left:893.20px;">Tự động hạch toán HĐ</div>
<div class="t" style="font-size:9.5px;color:#fff;line-height:16px;top:56.00px;font-weight:bold;letter-spacing:0.044px;left:1021.20px;">Mới</div>
<div class="t" style="font-size:12px;color:#2a2a2a;line-height:16px;top:56.20px;letter-spacing:-0.152px;left:1079.00px;">Trả lại hàng bán</div>
<div class="t" style="font-size:12px;color:#2a2a2a;line-height:16px;top:56.20px;letter-spacing:-0.040px;left:1199.30px;">Hàng hóa, dịch vụ</div>
<div class="t" style="font-size:12px;color:#2a2a2a;line-height:16px;top:58.00px;letter-spacing:-0.220px;left:1332.30px;">Khác</div>
<div class="t" style="font-size:12px;color:#b0b3b8;line-height:16px;top:91.30px;font-weight:bold;letter-spacing:-0.245px;left:276.70px;">Thực hiện hàng loạt</div>
<div class="t" style="font-size:12px;color:#111;line-height:16px;top:91.30px;font-weight:bold;letter-spacing:-0.772px;left:447.50px;">Lọc</div>
<div class="t" style="font-size:12px;color:#1f1f1f;line-height:16px;top:90.70px;letter-spacing:-0.155px;left:510.00px;">Đầu năm tới hiện tại</div>
<div class="t" style="font-size:11.5px;color:#8c8c8c;line-height:16px;top:93.30px;font-style:italic;letter-spacing:-0.254px;left:1064.00px;">Tìm kiếm</div>
<div class="t" style="font-size:12px;color:#fff;line-height:16px;top:92.30px;font-weight:bold;letter-spacing:-0.266px;left:1262.20px;">Thêm hợp đồng bán</div>
<div class="t" style="font-size:12px;color:#fff;line-height:16px;top:92.30px;font-weight:bold;letter-spacing:-0.154px;left:1454.60px;">Thêm bằng AI</div>
<div class="t" style="font-size:11px;color:#111;line-height:16px;top:125.00px;font-weight:bold;letter-spacing:-0.200px;left:280.70px;">Ngày ghi doanh số</div>
<div class="t" style="font-size:11px;color:#111;line-height:16px;top:125.00px;font-weight:bold;letter-spacing:-0.331px;left:424.20px;">Số hợp đồng</div>
<div class="t" style="font-size:11px;color:#111;line-height:16px;top:125.00px;font-weight:bold;letter-spacing:-0.203px;left:559.60px;">Tình trạng ghi doanh số</div>
<div class="t" style="font-size:11px;color:#111;line-height:16px;top:125.00px;font-weight:bold;letter-spacing:-0.067px;left:734.60px;">Ngày ký</div>
<div class="t" style="font-size:11px;color:#111;line-height:16px;top:125.00px;font-weight:bold;letter-spacing:-0.206px;left:819.50px;">Khách hàng</div>
<div class="t" style="font-size:11px;color:#111;line-height:16px;top:125.00px;font-weight:bold;letter-spacing:-0.310px;left:1058.00px;">Giá trị hợp đồng</div>
<div class="t" style="font-size:11px;color:#111;line-height:16px;top:125.00px;font-weight:bold;letter-spacing:-0.228px;left:1212.40px;">Giá trị thanh lý</div>
<div class="t" style="font-size:11px;color:#111;line-height:16px;top:125.00px;font-weight:bold;left:1351.50px;">G</div>
<div class="t" style="font-size:11px;color:#111;line-height:16px;top:125.00px;font-weight:bold;letter-spacing:-0.297px;left:1481.00px;">Chức năng</div>
<div class="t" style="font-size:12px;color:#1f1f1f;line-height:16px;top:152.30px;letter-spacing:0.660px;left:300.80px;">13/10/2025</div>
<div class="t" style="font-size:12px;color:#1a73c2;line-height:16px;top:152.30px;letter-spacing:0.297px;left:424.40px;">HĐB00002</div>
<div class="t" style="font-size:12px;color:#3da23a;line-height:16px;top:152.30px;letter-spacing:-0.157px;left:559.60px;">Chưa ghi doanh số</div>
<div class="t" style="font-size:12px;color:#1f1f1f;line-height:16px;top:152.30px;letter-spacing:0.682px;left:727.80px;">13/10/2025</div>
<div class="t" style="font-size:12px;color:#1f1f1f;line-height:16px;top:152.30px;letter-spacing:0.471px;left:1085.70px;">31.920.000</div>
<div class="t" style="font-size:12px;color:#1f1f1f;line-height:16px;top:152.30px;letter-spacing:0.471px;left:1232.40px;">31.920.000</div>
<div class="t" style="font-size:12px;color:#1277c8;line-height:16px;top:151.30px;-webkit-text-stroke:0.4px #1277c8;letter-spacing:0.200px;left:1384.30px;">Lập chứng từ bán hàng</div>
<div class="t" style="font-size:12px;color:#1f1f1f;line-height:16px;top:179.00px;letter-spacing:0.759px;left:300.80px;">11/09/2025</div>
<div class="t" style="font-size:12px;color:#1a73c2;line-height:16px;top:179.00px;letter-spacing:0.297px;left:424.40px;">HĐB00001</div>
<div class="t" style="font-size:12px;color:#3da23a;line-height:16px;top:179.00px;letter-spacing:-0.157px;left:559.60px;">Chưa ghi doanh số</div>
<div class="t" style="font-size:12px;color:#1f1f1f;line-height:16px;top:179.00px;letter-spacing:0.781px;left:727.80px;">11/09/2025</div>
<div class="t" style="font-size:12px;color:#1f1f1f;line-height:16px;top:179.00px;letter-spacing:0.414px;left:1093.30px;">3.500.000</div>
<div class="t" style="font-size:12px;color:#1f1f1f;line-height:16px;top:179.00px;letter-spacing:0.414px;left:1240.00px;">3.500.000</div>
<div class="t" style="font-size:12px;color:#1277c8;line-height:16px;top:178.00px;-webkit-text-stroke:0.4px #1277c8;letter-spacing:0.200px;left:1384.30px;">Lập chứng từ bán hàng</div>
<div class="t" style="font-size:11px;color:#111;line-height:16px;top:204.00px;font-weight:bold;letter-spacing:-0.130px;left:321.00px;">Tổng</div>
<div class="t" style="font-size:11.5px;color:#111;line-height:16px;top:204.00px;font-weight:bold;letter-spacing:0.215px;left:1091.90px;">35.420.000</div>
<div class="t" style="font-size:11.5px;color:#111;line-height:16px;top:204.00px;font-weight:bold;letter-spacing:0.215px;left:1238.50px;">35.420.000</div>
<div class="t" style="font-size:12px;color:#333;line-height:16px;top:233.70px;letter-spacing:-0.037px;left:235.50px;">Tổng số: <b style="color:#111">2</b> bản ghi</div>
<div class="t" style="font-size:12px;color:#1f1f1f;line-height:16px;top:233.80px;letter-spacing:0.102px;left:1260.00px;">20 bản ghi trên 1 trang</div>
<div class="t" style="font-size:12px;color:#a8a8a8;line-height:16px;top:233.80px;letter-spacing:-0.524px;left:1444.30px;">Trước</div>
<div class="t" style="font-size:12px;color:#111;line-height:16px;top:233.70px;font-weight:bold;left:1494.30px;">1</div>
<div class="t" style="font-size:12px;color:#a8a8a8;line-height:16px;top:233.80px;letter-spacing:-0.680px;left:1520.30px;">Sau</div>
<div class="t" style="font-size:12px;color:#111;line-height:16px;top:596.80px;font-weight:bold;letter-spacing:-0.239px;left:233.00px;">Chi tiết</div>
<div class="t" style="font-size:11px;color:#111;line-height:16px;top:623.00px;font-weight:bold;left:231.00px;">#</div>
<div class="t" style="font-size:11px;color:#111;line-height:16px;top:623.00px;font-weight:bold;letter-spacing:-0.087px;left:262.20px;">Mã hàng</div>
<div class="t" style="font-size:11px;color:#111;line-height:16px;top:623.00px;font-weight:bold;letter-spacing:-0.284px;left:477.50px;">Tên hàng</div>
<div class="t" style="font-size:11px;color:#111;line-height:16px;top:623.00px;font-weight:bold;letter-spacing:0.400px;left:611.80px;">ĐVT</div>
<div class="t" style="font-size:11px;color:#111;line-height:16px;top:623.00px;font-weight:bold;letter-spacing:-0.361px;left:764.20px;">Số lượng yêu cầu</div>
<div class="t" style="font-size:11px;color:#111;line-height:16px;top:623.00px;font-weight:bold;letter-spacing:-0.405px;left:902.10px;">Số lượng đã giao</div>
<div class="t" style="font-size:11px;color:#111;line-height:16px;top:623.00px;font-weight:bold;letter-spacing:-0.268px;left:1036.30px;">Đơn giá sau thuế</div>
<div class="t" style="font-size:11px;color:#111;line-height:16px;top:623.00px;font-weight:bold;letter-spacing:-0.440px;left:1218.20px;">Đơn giá</div>
<div class="t" style="font-size:11px;color:#111;line-height:16px;top:623.00px;font-weight:bold;letter-spacing:-0.157px;left:1338.00px;">Thành tiền</div>
<div class="t" style="font-size:11px;color:#111;line-height:16px;top:623.00px;font-weight:bold;left:1463.00px;">Tỷ lệ CK (%)</div>
<div class="t" style="font-size:12px;color:#1f1f1f;line-height:16px;top:679.00px;left:232.00px;">1</div>
<div class="t" style="font-size:12px;color:#1f1f1f;line-height:16px;top:679.00px;letter-spacing:-0.079px;left:262.20px;">CKDTD5I1HL3KSNKBD3SNKV1V01</div>
<div class="t" style="font-size:12px;color:#1f1f1f;line-height:14px;top:645.00px;letter-spacing:-0.175px;left:477.00px;">Combo Kem dưỡng</div>
<div class="t" style="font-size:12px;color:#1f1f1f;line-height:14px;top:659.00px;letter-spacing:0.080px;left:477.00px;">trắng da 5 in 1 (Hộp/</div>
<div class="t" style="font-size:12px;color:#1f1f1f;line-height:14px;top:673.00px;letter-spacing:0.027px;left:477.00px;">lọ 30g) + Kem Sắc</div>
<div class="t" style="font-size:12px;color:#1f1f1f;line-height:14px;top:687.00px;letter-spacing:-0.095px;left:477.00px;">Ngọc Khang Ban</div>
<div class="t" style="font-size:12px;color:#1f1f1f;line-height:14px;top:701.00px;letter-spacing:0.064px;left:477.00px;">Đêm 30g + Sắc Ngọc</div>
<div class="t" style="font-size:12px;color:#1f1f1f;line-height:14px;top:715.00px;letter-spacing:0.070px;left:477.00px;">Khang VTL 180 viên</div>
<div class="t" style="font-size:12px;color:#1f1f1f;line-height:16px;top:679.00px;letter-spacing:0.128px;left:611.80px;">Chiếc</div>
<div class="t" style="font-size:12px;color:#1f1f1f;line-height:16px;top:679.00px;letter-spacing:0.367px;left:831.00px;">20,00</div>
<div class="t" style="font-size:12px;color:#1f1f1f;line-height:16px;top:679.00px;letter-spacing:0.314px;left:973.30px;">0,00</div>
<div class="t" style="font-size:12px;color:#1f1f1f;line-height:16px;top:679.00px;letter-spacing:0.402px;left:1058.00px;">1.596.000,00</div>
<div class="t" style="font-size:12px;color:#1f1f1f;line-height:16px;top:679.00px;letter-spacing:0.402px;left:1193.10px;">1.596.000,00</div>
<div class="t" style="font-size:12px;color:#1f1f1f;line-height:16px;top:679.00px;letter-spacing:0.426px;left:1338.40px;">31.920.000</div>
<div class="t" style="font-size:12px;color:#1f1f1f;line-height:16px;top:679.00px;letter-spacing:0.314px;left:1513.10px;">0,00</div>
<div class="t" style="font-size:11px;color:#111;line-height:16px;top:733.00px;font-weight:bold;letter-spacing:-0.364px;left:262.70px;">Tổng</div>
<div class="t" style="font-size:11.5px;color:#111;line-height:16px;top:733.00px;font-weight:bold;letter-spacing:0.130px;left:834.40px;">20,00</div>
<div class="t" style="font-size:11.5px;color:#111;line-height:16px;top:733.00px;font-weight:bold;letter-spacing:0.170px;left:976.00px;">0,00</div>
<div class="t" style="font-size:11.5px;color:#111;line-height:16px;top:733.00px;font-weight:bold;letter-spacing:0.226px;left:1344.20px;">31.920.000</div>
<div class="t" style="font-size:12px;color:#333;line-height:16px;top:761.70px;letter-spacing:-0.037px;left:235.50px;">Tổng số: <b style="color:#111">1</b> bản ghi</div>
<div class="t" style="font-size:12px;color:#1f1f1f;line-height:16px;top:762.00px;letter-spacing:0.102px;left:1260.00px;">20 bản ghi trên 1 trang</div>
<div class="t" style="font-size:12px;color:#a8a8a8;line-height:16px;top:762.00px;letter-spacing:-0.524px;left:1444.30px;">Trước</div>
<div class="t" style="font-size:12px;color:#111;line-height:16px;top:761.90px;font-weight:bold;left:1494.30px;">1</div>
<div class="t" style="font-size:12px;color:#a8a8a8;line-height:16px;top:762.00px;letter-spacing:-0.680px;left:1520.30px;">Sau</div>
</div>
<div id="top">
<div class="red" style="left:8px;top:403px;width:179px;height:35px"></div>
<div class="num" style="left:162px;top:377px">1</div>
<div class="red" style="left:552px;top:49px;width:167px;height:37px"></div>
<div class="num" style="left:531px;top:23.700px">2</div>
<div class="red" style="left:1242px;top:81px;width:173px;height:40px"></div>
<div class="num" style="left:1219px;top:56.700px">3</div>
</div>
<div id="frame"></div>
</body>
</html>
